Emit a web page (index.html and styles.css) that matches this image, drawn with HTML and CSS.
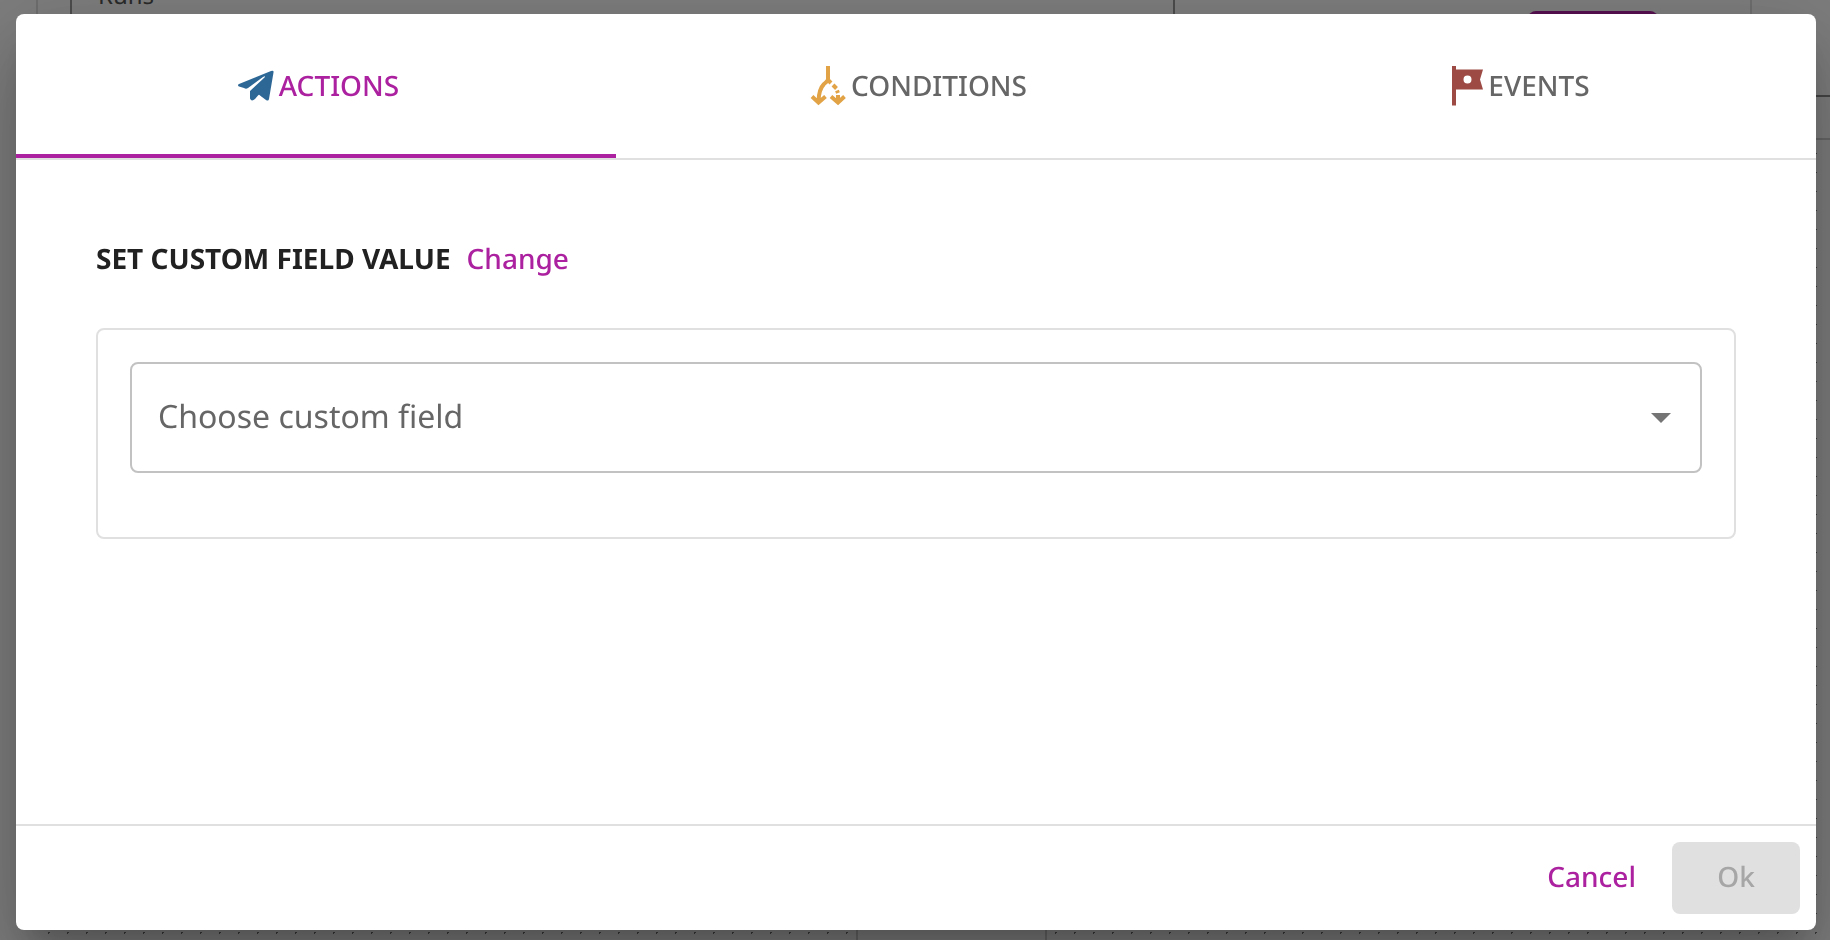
FILE: index.html
```html
<!DOCTYPE html>
<html lang="en">
<head>
    <meta charset="UTF-8">
    <meta name="viewport" content="width=device-width, initial-scale=1.0">
    <title>Set custom field value</title>
    <link rel="stylesheet" href="styles.css">
</head>
<body>
    <!-- page behind the dialog -->
    <div class="page" inert>
        <div class="page-header">
            <div class="run-panel">
                <div class="run-field"><span>Runs</span></div>
                <button class="run-button" type="button" aria-label="Save"></button>
            </div>
        </div>
        <div class="page-toolbar"></div>
        <div class="canvas">
            <div class="canvas-node"></div>
        </div>
    </div>

    <div class="backdrop">
        <div class="dialog" role="dialog" aria-modal="true" aria-labelledby="dialog-title">
            <div class="tabs" role="tablist">
                <button class="tab active" type="button" role="tab" aria-selected="true">
                    <svg width="36" height="32" viewBox="0 0 36 32" fill="#2d6796" aria-hidden="true">
                        <path d="M33 1Q36 0 35.500 2.500L31 29Q30.500 31.500 28 30L22 25.500Q21 24 20 25.500L17 29Q13.500 32 12 28.500V21L26.500 7.500Q28 5.500 25 7L10 18Q8 19.500 6 18L1 16.500Q-1 15 1 14Z"/>
                    </svg>
                    ACTIONS
                </button>
                <button class="tab" type="button" role="tab" aria-selected="false">
                    <svg width="36" height="40" viewBox="0 0 36 40" fill="none" stroke="#e1a345" stroke-width="4" aria-hidden="true">
                        <path d="M18 0V13Q18 15 14 18Q9 23 8.500 35"/>
                        <path d="M2 30.500L8.500 36.500L15.500 30.500M21 30.500L28 36.500L34.500 30.500"/>
                        <path d="M17 13L21 17M23 19L26.500 22.500M27 24.500L28 27M28 29V36"/>
                        <path d="M5 32H12L8.500 36ZM24 32H32L28 36Z" fill="#e1a345" stroke="none"/>
                    </svg>
                    CONDITIONS
                </button>
                <button class="tab" type="button" role="tab" aria-selected="false">
                    <svg width="36" height="40" viewBox="0 0 36 40" fill="#9d4a45" aria-hidden="true">
                        <path fill-rule="evenodd" d="M5 0H9V3.500H36L33 13.500L36 23.500H9V39.500H5ZM24.500 13.500A4 4 0 1 0 16.500 13.500A4 4 0 1 0 24.500 13.500Z"/>
                    </svg>
                    EVENTS
                </button>
            </div>

            <div class="dialog-body">
                <div class="title-row">
                    <h2 id="dialog-title">SET CUSTOM FIELD VALUE</h2>
                    <a href="#">Change</a>
                </div>
                <div class="field-box">
                    <div class="select-wrap">
                        <select class="field-select" aria-label="Choose custom field">
                            <option>Choose custom field</option>
                        </select>
                        <span class="arrow"></span>
                    </div>
                </div>
            </div>

            <div class="dialog-actions">
                <button class="btn btn-cancel" type="button">Cancel</button>
                <button class="btn btn-ok" type="button" disabled>Ok</button>
            </div>
        </div>
    </div>
</body>
</html>
```

FILE: styles.css
```css
* {
    box-sizing: border-box;
}

body {
    margin: 0;
    height: 100vh;
    overflow: hidden;
    font-family: "Noto Sans", sans-serif;
    font-size: 28px;
    color: #212121;
    text-rendering: geometricPrecision;
}

button,
select {
    font-family: inherit;
    text-rendering: inherit;
}

/* page behind the dialog */
.page {
    display: flex;
    flex-direction: column;
    height: 100vh;
    padding-left: 36px;
    background-color: #fafafa;
}

.page-header {
    height: 97px;
    padding-right: 78px;
    border-bottom: 2px solid #8a8a8a;
}

.run-panel {
    display: flex;
    justify-content: space-between;
    height: 60px;
    padding: 0 92px 0 32px;
    border: solid #dcdcdc;
    border-width: 0 2px;
}

.run-field {
    width: 1105px;
    border: solid #999;
    border-width: 0 2px;
    padding-left: 26px;
    color: #555;
    font-size: 24px;
    line-height: 8px;
}

.run-field span {
    display: block;
    margin-top: -8px;
}

.run-button {
    width: 130px;
    height: 48px;
    margin-top: 11px;
    border: none;
    border-radius: 8px;
    background-color: #ab219f;
}

.page-toolbar {
    height: 43px;
    border-bottom: 2px solid #ccc;
}

.canvas {
    flex: 1;
    display: flex;
    justify-content: center;
    padding-left: 36px;
    background-image: radial-gradient(circle, #777 1px, transparent 1px);
    background-size: 19px 19px;
    background-position: 3px 4px;
}

.canvas-node {
    width: 191px;
    border: solid #ccc;
    border-width: 0 2px;
    background-color: #fafafa;
}

/* dialog */
.backdrop {
    position: fixed;
    inset: 0;
    display: flex;
    padding: 14px 14px 10px 16px;
    background-color: rgba(0, 0, 0, 0.5);
}

.dialog {
    flex: 1;
    display: flex;
    flex-direction: column;
    background-color: #fff;
    border-radius: 8px;
    box-shadow: 0 22px 30px -14px rgba(0, 0, 0, 0.2),
        0 48px 76px 6px rgba(0, 0, 0, 0.14),
        0 18px 92px 16px rgba(0, 0, 0, 0.12);
}

.tabs {
    display: grid;
    grid-template-columns: repeat(3, 1fr);
    border-bottom: 2px solid #e0e0e0;
}

.tab {
    display: flex;
    align-items: center;
    justify-content: center;
    gap: 5px;
    height: 144px;
    padding: 3px 0 0 5px;
    border: none;
    border-bottom: 4px solid transparent;
    background: none;
    color: #666;
    font-size: 28px;
    font-weight: 500;
    cursor: pointer;
}

.tab.active {
    color: #ab219f;
    border-bottom-color: #ab219f;
}

.dialog-body {
    flex: 1;
    padding: 80px;
}

.title-row {
    display: flex;
    gap: 16px;
    line-height: 38px;
    margin-bottom: 50px;
}

h2 {
    margin: 0;
    font-size: 28px;
    font-weight: 700;
}

a {
    color: #ab219f;
    font-weight: 500;
    text-decoration: none;
}

.field-box {
    padding: 32px 32px 64px;
    border: 2px solid #e0e0e0;
    border-radius: 8px;
}

.select-wrap {
    position: relative;
}

.field-select {
    display: block;
    width: 100%;
    height: 111px;
    padding: 0 26px 2px;
    border: 2px solid #c2c2c2;
    border-radius: 8px;
    background-color: #fff;
    color: #666;
    font-size: 32px;
    appearance: none;
}

.arrow {
    position: absolute;
    top: 51px;
    right: 31px;
    border: 10px solid transparent;
    border-top-color: #757575;
    border-bottom: none;
    pointer-events: none;
}

.dialog-actions {
    display: flex;
    justify-content: flex-end;
    gap: 4px;
    padding: 16px;
    border-top: 2px solid #e0e0e0;
}

.btn {
    height: 72px;
    padding: 0 32px 2px;
    border: none;
    border-radius: 8px;
    background: none;
    font-size: 28px;
    font-weight: 500;
}

.btn-cancel {
    color: #ab219f;
}

.btn-ok {
    width: 128px;
    background-color: #e0e0e0;
    color: #a6a6a6;
}
```
